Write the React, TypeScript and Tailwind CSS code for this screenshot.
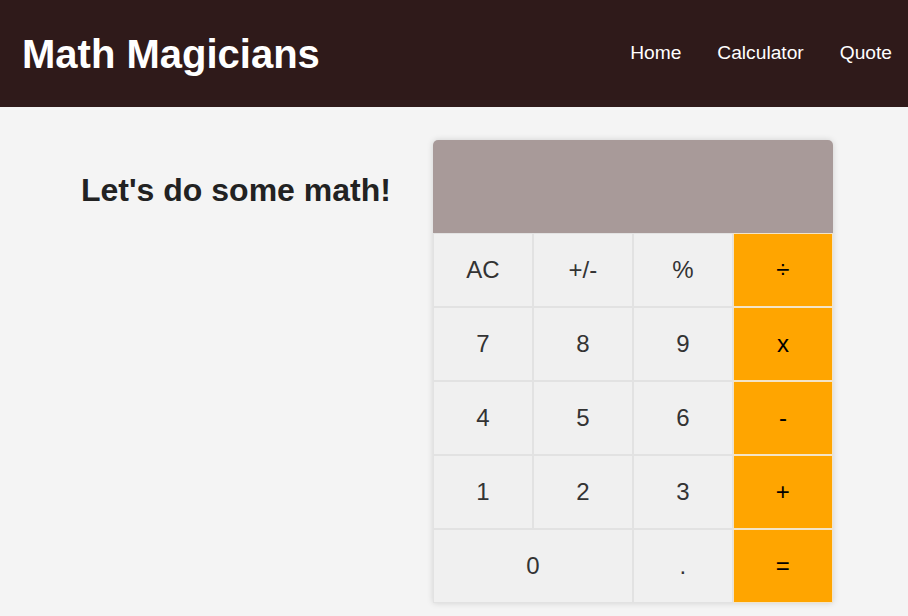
import React from "react";

type Btn = { label: string; op?: boolean; wide?: boolean };

const buttons: Btn[] = [
  { label: "AC" },
  { label: "+/-" },
  { label: "%" },
  { label: "÷", op: true },
  { label: "7" },
  { label: "8" },
  { label: "9" },
  { label: "x", op: true },
  { label: "4" },
  { label: "5" },
  { label: "6" },
  { label: "-", op: true },
  { label: "1" },
  { label: "2" },
  { label: "3" },
  { label: "+", op: true },
  { label: "0", wide: true },
  { label: "." },
  { label: "=", op: true },
];

export default function App() {
  return (
    <div className="min-h-[616px] bg-[#f4f4f4] font-['Liberation_Sans',Arial,sans-serif]">
      <header className="flex h-[107px] items-center justify-between bg-[#2f1a1a] pl-[22px] pr-[16px]">
        <h1 className="text-[40px] font-bold leading-none text-white">Math Magicians</h1>
        <nav className="flex gap-[36px] text-[19.2px] text-white">
          <a>Home</a>
          <a>Calculator</a>
          <a>Quote</a>
        </nav>
      </header>
      <main className="flex items-start gap-[42px] pl-[81px] pt-[33px]">
        <h2 className="mt-[34px] shrink-0 text-[32px] font-bold leading-[32px] text-[#222]">
          Let's do some math!
        </h2>
        <div className="w-[400px] shrink-0 rounded-t-[5px] shadow-[0_0_6px_rgba(0,0,0,0.15)]">
          <div className="h-[93px] rounded-t-[5px] bg-[#a89a99]" />
          <div className="grid grid-cols-4">
            {buttons.map((b) => (
              <button
                key={b.label}
                className={
                  b.op
                    ? "flex h-[74px] items-center justify-center border border-[#f3e4c8] bg-[#ffa500] text-[24px] text-black"
                    : b.wide
                    ? "col-span-2 flex h-[74px] items-center justify-center border border-[#e2e2e2] bg-[#f0f0f0] text-[24px] text-[#333]"
                    : "flex h-[74px] items-center justify-center border border-[#e2e2e2] bg-[#f0f0f0] text-[24px] text-[#333]"
                }
              >
                {b.label}
              </button>
            ))}
          </div>
        </div>
      </main>
    </div>
  );
}
